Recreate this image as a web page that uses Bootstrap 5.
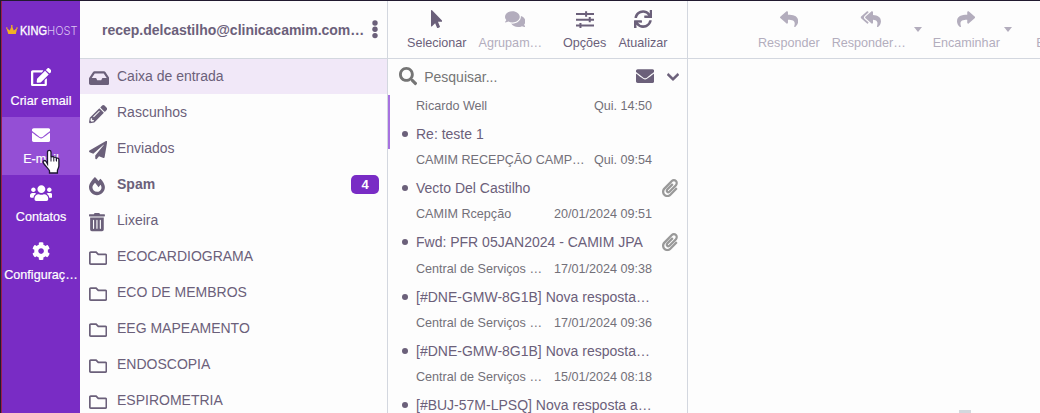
<!DOCTYPE html>
<html lang="pt-BR">
<head>
<meta charset="utf-8">
<title>Webmail</title>
<link href="https://cdn.jsdelivr.net/npm/bootstrap@5.3.0/dist/css/bootstrap.min.css" rel="stylesheet">
<style>
  :root { --ink:#6b607a; --line:#d3d7df; --brand:#792cc5; }
  body { font:14px/20px "Liberation Sans", Arial, sans-serif; color:var(--ink); background:#fdfdfd; height:413px; overflow:hidden; border-top:1px solid #211a30; }
  .fa { height:18.2px; width:auto; fill:currentColor; flex:none; display:block; }
  .frame { height:412px; border-left:1px solid #211a30; }
  .taskbar { width:79px; background:var(--brand); border-left:1px solid #97204d; color:#fff; }
  .brand { height:58px; padding:2px 0 0 4px; }
  .task { height:58px; color:#fff; font-size:12.6px; line-height:16px; padding-top:9px; text-decoration:none; white-space:nowrap; -webkit-text-stroke:.2px #fff; }
  .task .fa { margin-bottom:6.8px; }
  .task.on { background:#944fd5; }
  .folders { width:308px; border-right:1px solid var(--line); }
  .messages { width:300px; border-right:1px solid var(--line); }
  .top { height:58px; border-bottom:1px solid var(--line); flex:none; }
  .account { padding-left:22px; letter-spacing:-.01px; }
  .folder { height:36px; padding:0 8px 0 9px; }
  .folder > div { width:28px; padding-top:3px; flex:none; }
  .folder > span:nth-child(2) { padding-bottom:2px; }
  .folder.on { background:#f1e8f8; height:35px; margin-bottom:1px; }
  .folder.on > span:nth-child(2) { padding-bottom:1px; }
  .count { background:var(--brand); color:#fff; width:28px; height:19px; line-height:19px; border-radius:5px; font-size:13px; text-align:center; margin-bottom:1px; }
  .tool { padding:9px 6px 0; font-size:12.6px; line-height:16px; white-space:nowrap; }
  .tool .fa { margin:0 auto 7px; }
  .dim { color:#b3adbd; }
  .caret { width:0; border:4px solid transparent; border-top:5px solid #b3adbd; border-bottom:0; margin-top:26px; }
  .search { height:35px; padding:0 8px 0 11px; color:#757575; }
  .msgs { position:relative; margin-top:1px; }
  .focusbar { position:absolute; left:0; top:0; width:2px; height:54px; background:#a772e0; }
  .msg { height:54.2px; padding:0 9px 0 14px; white-space:nowrap; }
  .meta { height:23px; line-height:23px; font-size:12.6px; color:#737079; padding:0 26px 0 14px; }
  .subj { height:31.2px; padding-top:1px; }
  .dot { width:6px; height:6px; border-radius:50%; background:var(--ink); margin-right:8px; flex:none; }
  .clip { color:#999; margin-left:auto; }
  .pointer { position:absolute; left:42px; top:149px; }
  .tile { position:absolute; left:959px; top:410px; width:12px; height:3px; background:#d3d8de; }
</style>
<script src="https://cdn.jsdelivr.net/npm/bootstrap@5.3.0/dist/js/bootstrap.bundle.min.js"></script>
</head>
<body>
<svg width="0" height="0" class="position-absolute">
  <symbol id="edit" viewBox="0 0 576 512"><path d="M402.6 83.2l90.2 90.2c3.8 3.8 3.8 10 0 13.8L274.4 405.6l-92.8 10.3c-12.4 1.4-22.9-9.1-21.5-21.5l10.3-92.8L388.8 83.2c3.8-3.8 10-3.8 13.8 0zm162-22.9l-48.8-48.8c-15.2-15.2-39.9-15.2-55.2 0l-35.4 35.4c-3.8 3.8-3.8 10 0 13.8l90.2 90.2c3.8 3.8 10 3.8 13.8 0l35.4-35.4c15.2-15.3 15.2-40 0-55.2zM384 346.2V448H64V128h229.8c3.2 0 6.2-1.3 8.5-3.5l40-40c7.6-7.6 2.2-20.5-8.5-20.5H48C21.5 64 0 85.5 0 112v352c0 26.5 21.5 48 48 48h352c26.5 0 48-21.5 48-48V306.2c0-10.7-12.9-16-20.5-8.5l-40 40c-2.2 2.3-3.5 5.3-3.5 8.5z"/></symbol>
  <symbol id="envelope" viewBox="0 0 512 512"><path d="M502.3 190.8c3.9-3.1 9.7-.2 9.7 4.7V400c0 26.5-21.5 48-48 48H48c-26.5 0-48-21.5-48-48V195.6c0-5 5.7-7.8 9.7-4.7 22.4 17.4 52.1 39.5 154.1 113.6 21.1 15.4 56.7 47.8 92.2 47.6 35.7.3 72-32.8 92.3-47.6 102-74.1 131.6-96.3 154-113.7zM256 320c23.2.4 56.6-29.2 73.4-41.4 132.7-96.3 142.8-104.7 173.4-128.7 5.8-4.5 9.2-11.5 9.2-18.9v-19c0-26.5-21.5-48-48-48H48c-26.5 0-48 21.5-48 48v19c0 7.4 3.4 14.3 9.2 18.9 30.6 23.9 40.7 32.4 173.4 128.7 16.8 12.2 50.2 41.8 73.4 41.4z"/></symbol>
  <symbol id="users" viewBox="0 0 640 512"><path d="M96 224c35.3 0 64-28.7 64-64s-28.7-64-64-64-64 28.7-64 64 28.7 64 64 64zm448 0c35.3 0 64-28.7 64-64s-28.7-64-64-64-64 28.7-64 64 28.7 64 64 64zm32 32h-64c-17.6 0-33.5 7.1-45.1 18.6 40.3 22.1 68.9 62 75.1 109.4h66c17.7 0 32-14.3 32-32v-32c0-35.3-28.7-64-64-64zm-256 0c61.9 0 112-50.1 112-112S381.9 32 320 32 208 82.1 208 144s50.1 112 112 112zm76.8 32h-8.3c-20.8 10-43.9 16-68.5 16s-47.6-6-68.5-16h-8.3C179.6 288 128 339.6 128 403.2V432c0 26.5 21.5 48 48 48h288c26.5 0 48-21.5 48-48v-28.8c0-63.6-51.6-115.2-115.2-115.2zm-223.7-13.4C161.5 263.1 145.6 256 128 256H64c-35.3 0-64 28.7-64 64v32c0 17.7 14.3 32 32 32h65.9c6.3-47.4 34.9-87.3 75.2-109.4z"/></symbol>
  <symbol id="cog" viewBox="0 0 512 512"><path d="M487.4 315.7l-42.6-24.6c4.3-23.2 4.3-47 0-70.2l42.6-24.6c4.9-2.8 7.1-8.6 5.5-14-11.1-35.6-30-67.8-54.7-94.6-3.8-4.1-10-5.1-14.8-2.3L380.8 110c-17.9-15.4-38.5-27.3-60.8-35.1V25.8c0-5.6-3.9-10.5-9.4-11.7-36.7-8.2-74.3-7.8-109.2 0-5.5 1.2-9.4 6.1-9.4 11.7V75c-22.2 7.9-42.8 19.8-60.8 35.1L88.7 85.5c-4.9-2.8-11-1.9-14.8 2.3-24.7 26.7-43.6 58.9-54.7 94.6-1.7 5.4.6 11.2 5.5 14L67.3 221c-4.3 23.2-4.3 47 0 70.2l-42.6 24.6c-4.9 2.8-7.1 8.6-5.5 14 11.1 35.6 30 67.8 54.7 94.6 3.8 4.1 10 5.1 14.8 2.3l42.6-24.6c17.9 15.4 38.5 27.3 60.8 35.1v49.2c0 5.6 3.9 10.5 9.4 11.7 36.7 8.2 74.3 7.8 109.2 0 5.5-1.2 9.4-6.1 9.4-11.7v-49.2c22.2-7.9 42.8-19.8 60.8-35.1l42.6 24.6c4.9 2.8 11 1.9 14.8-2.3 24.7-26.7 43.6-58.9 54.7-94.6 1.5-5.5-.7-11.3-5.6-14.1zM256 336c-44.1 0-80-35.9-80-80s35.9-80 80-80 80 35.9 80 80-35.9 80-80 80z"/></symbol>
  <symbol id="paperclip" viewBox="0 0 448 512"><path d="M43.246 466.142c-58.43-60.289-57.341-157.511 1.386-217.581L254.392 34c44.316-45.332 116.351-45.336 160.671 0 43.89 44.894 43.943 117.329 0 162.276L232.214 383.128c-29.855 30.537-78.633 30.111-107.982-.998-28.275-29.97-27.368-77.473 1.452-106.953l143.743-146.835c6.182-6.314 16.312-6.422 22.626-.241l22.861 22.379c6.315 6.182 6.422 16.312.241 22.626L171.427 319.927c-4.932 5.045-5.236 13.428-.648 18.292 4.372 4.634 11.245 4.711 15.688.165l182.849-186.851c19.613-20.062 19.613-52.725-.011-72.798-19.189-19.627-49.957-19.637-69.154 0L90.39 293.295c-34.763 35.56-35.299 93.12-1.191 128.313 34.01 35.093 88.985 35.137 123.058.286l172.06-175.999c6.177-6.319 16.307-6.433 22.626-.256l22.877 22.364c6.319 6.177 6.434 16.307.256 22.626l-172.06 175.998c-59.576 60.938-155.943 60.216-214.77-.485z"/></symbol>
  <symbol id="folder" viewBox="0 0 512 512"><path d="M464 128H272l-54.63-54.63c-6-6-14.14-9.37-22.63-9.37H48C21.49 64 0 85.49 0 112v288c0 26.51 21.49 48 48 48h416c26.51 0 48-21.49 48-48V176c0-26.51-21.49-48-48-48zm0 272H48V112h140.12l54.63 54.63c6 6 14.14 9.37 22.63 9.37H464v224z"/></symbol>
  <symbol id="reply" viewBox="0 0 512 512"><path d="M8.309 189.836L184.313 37.851C199.719 24.546 224 35.347 224 56.015v80.053c160.629 1.839 288 34.032 288 186.258 0 61.441-39.581 122.309-83.333 154.132-13.653 9.931-33.111-2.533-28.077-18.631 45.344-145.012-21.507-183.51-176.59-185.742V360c0 20.7-24.3 31.453-39.687 18.164l-176.004-152c-11.071-9.562-11.086-26.753 0-36.328z"/></symbol>
</svg>

<div class="frame d-flex">
  <nav class="taskbar d-flex flex-column flex-shrink-0">
    <div class="brand d-flex align-items-center">
      <svg width="74" height="20" viewBox="0 0 74 20">
        <path d="M2 14L0 8l3.5 2.500L5.500 5.500l2 5L11 8 9.500 14z" transform="translate(.3 -1)" fill="#f0b024"/>
        <g fill="#f0b024"><circle cx=".8" cy="7" r=".8"/><circle cx="5.800" cy="4.800" r=".9"/><circle cx="11" cy="7" r=".8"/></g>
        <text x="14" y="14" font-family="Liberation Sans, sans-serif" font-size="12.500" fill="#fff" stroke="#fff" stroke-width=".35" textLength="27" lengthAdjust="spacingAndGlyphs">KING</text>
        <text x="41" y="14" font-family="Inter, sans-serif" font-weight="300" font-size="12.300" fill="#dcc4f2" textLength="30.500" lengthAdjust="spacingAndGlyphs">HOST</text>
      </svg>
    </div>
    <a class="task d-flex flex-column align-items-center"><svg class="fa" viewBox="0 0 576 512"><use href="#edit"/></svg>Criar email</a>
    <a class="task on d-flex flex-column align-items-center"><svg class="fa" viewBox="0 0 512 512"><use href="#envelope"/></svg>E-mail</a>
    <a class="task d-flex flex-column align-items-center"><svg class="fa" viewBox="0 0 640 512"><use href="#users"/></svg>Contatos</a>
    <a class="task d-flex flex-column align-items-center"><svg class="fa" viewBox="0 0 512 512"><use href="#cog"/></svg>Configuraç…</a>
  </nav>

  <aside class="folders flex-shrink-0">
    <div class="top account d-flex align-items-center fw-bold">
      <span class="flex-grow-1 text-nowrap">recep.delcastilho@clinicacamim.com…</span>
      <svg class="me-2" width="8" height="19" viewBox="0 0 8 19" fill="currentColor"><circle cx="4" cy="3" r="2.7"/><circle cx="4" cy="9.300" r="2.7"/><circle cx="4" cy="15.600" r="2.7"/></svg>
    </div>
    <div class="folder on d-flex align-items-center"><div><svg class="fa" viewBox="0 0 576 512"><path d="M567.938 243.908L462.25 85.374A48.003 48.003 0 0 0 422.311 64H153.689a48 48 0 0 0-39.938 21.374L8.062 243.908A47.994 47.994 0 0 0 0 270.533V400c0 26.51 21.49 48 48 48h480c26.51 0 48-21.49 48-48V270.533a47.994 47.994 0 0 0-8.062-26.625zM162.252 128h251.497l85.333 128H376l-32 64H232l-32-64H76.918l85.334-128z"/></svg></div><span>Caixa de entrada</span></div>
    <div class="folder d-flex align-items-center"><div><svg class="fa" viewBox="0 0 512 512"><path d="M497.9 142.1l-46.1 46.1c-4.7 4.7-12.3 4.7-17 0l-111-111c-4.7-4.7-4.7-12.3 0-17l46.1-46.1c18.7-18.7 49.1-18.7 67.9 0l60.1 60.1c18.8 18.7 18.8 49.1 0 67.9zM284.2 99.8L21.6 362.4.4 483.9c-2.9 16.4 11.4 30.6 27.8 27.8l121.5-21.3 262.6-262.6c4.7-4.7 4.7-12.3 0-17l-111-111c-4.8-4.7-12.4-4.7-17.1 0zM124.1 339.9c-5.5-5.5-5.5-14.3 0-19.8l154-154c5.5-5.5 14.3-5.5 19.8 0s5.5 14.3 0 19.8l-154 154c-5.5 5.5-14.3 5.5-19.8 0zM88 424h48v36.3l-64.5 11.3-31.1-31.1L51.7 376H88v48z"/></svg></div><span>Rascunhos</span></div>
    <div class="folder d-flex align-items-center"><div><svg class="fa" viewBox="0 0 512 512"><path d="M476 3.2L12.5 270.6c-18.1 10.4-15.8 35.6 2.2 43.2L121 358.4l287.3-253.2c5.5-4.9 13.3 2.6 8.6 8.3L176 407v80.5c0 23.6 28.5 32.9 42.5 15.8L282 426l124.6 52.2c14.2 6 30.4-2.9 33-18.2l72-432C515 7.8 493.3-6.8 476 3.2z"/></svg></div><span>Enviados</span></div>
    <div class="folder d-flex align-items-center fw-bold"><div><svg class="fa" viewBox="0 0 448 512"><path d="M323.56 51.2c-20.8 19.3-39.58 39.59-56.22 59.97C240.08 73.62 206.28 35.53 168 0 69.74 91.17 0 209.96 0 281.6 0 408.85 100.29 512 224 512s224-103.15 224-230.4c0-53.27-51.98-163.14-124.44-230.4zm-19.47 340.65C282.43 407.01 255.72 416 226.86 416 154.71 416 96 368.26 96 290.75c0-38.61 24.31-72.63 72.79-130.75 6.93 7.98 98.83 125.34 98.83 125.34l58.63-66.88c4.14 6.85 7.91 13.55 11.27 19.97 27.35 52.19 15.81 118.97-33.43 153.42z"/></svg></div><span class="flex-grow-1">Spam</span><span class="count">4</span></div>
    <div class="folder d-flex align-items-center"><div><svg class="fa" viewBox="0 0 448 512"><path d="M32 464a48 48 0 0 0 48 48h288a48 48 0 0 0 48-48V128H32zm272-256a16 16 0 0 1 32 0v224a16 16 0 0 1-32 0zm-96 0a16 16 0 0 1 32 0v224a16 16 0 0 1-32 0zm-96 0a16 16 0 0 1 32 0v224a16 16 0 0 1-32 0zM432 32H312l-9.4-18.7A24 24 0 0 0 281.1 0H166.8a23.72 23.72 0 0 0-21.4 13.3L136 32H16A16 16 0 0 0 0 48v32a16 16 0 0 0 16 16h416a16 16 0 0 0 16-16V48a16 16 0 0 0-16-16z"/></svg></div><span>Lixeira</span></div>
    <div class="folder d-flex align-items-center"><div><svg class="fa" viewBox="0 0 512 512"><use href="#folder"/></svg></div><span>ECOCARDIOGRAMA</span></div>
    <div class="folder d-flex align-items-center"><div><svg class="fa" viewBox="0 0 512 512"><use href="#folder"/></svg></div><span>ECO DE MEMBROS</span></div>
    <div class="folder d-flex align-items-center"><div><svg class="fa" viewBox="0 0 512 512"><use href="#folder"/></svg></div><span>EEG MAPEAMENTO</span></div>
    <div class="folder d-flex align-items-center"><div><svg class="fa" viewBox="0 0 512 512"><use href="#folder"/></svg></div><span>ENDOSCOPIA</span></div>
    <div class="folder d-flex align-items-center"><div><svg class="fa" viewBox="0 0 512 512"><use href="#folder"/></svg></div><span>ESPIROMETRIA</span></div>
  </aside>

  <section class="messages flex-shrink-0">
    <div class="top d-flex" style="padding-left:13px">
      <div class="tool"><svg class="fa" viewBox="0 0 320 512"><path d="M302.189 329.126H196.105l55.831 135.993c3.889 9.428-.555 19.999-9.444 23.999l-49.165 21.427c-9.165 4-19.443-.571-23.332-9.714l-53.053-129.136-86.664 89.138C18.729 472.71 0 463.554 0 447.977V18.299C0 1.899 19.921-6.096 30.277 5.443l284.412 292.542c11.472 11.179 3.007 31.141-12.5 31.141z"/></svg>Selecionar</div>
      <div class="tool dim" style="width:84.5px"><svg class="fa" viewBox="0 0 576 512"><path d="M416 192c0-88.4-93.1-160-208-160S0 103.6 0 192c0 34.3 14.1 65.9 38 92-13.4 30.2-35.5 54.2-35.8 54.5-2.2 2.3-2.8 5.7-1.5 8.7S4.8 352 8 352c36.6 0 66.9-12.3 88.7-25 32.2 15.7 70.3 25 111.3 25 114.9 0 208-71.6 208-160zm122 220c23.9-26 38-57.7 38-92 0-66.9-53.5-124.2-129.3-148.1.9 6.6 1.3 13.3 1.3 20.1 0 105.9-107.7 192-240 192-10.8 0-21.3-.8-31.7-1.9C207.8 439.6 281.8 480 368 480c41 0 79.1-9.2 111.3-25 21.8 12.7 52.1 25 88.7 25 3.2 0 6.1-1.9 7.3-4.8 1.3-2.9.7-6.3-1.5-8.7-.3-.3-22.4-24.2-35.8-54.5z"/></svg>Agrupam…</div>
      <div class="tool"><svg class="fa" viewBox="0 0 18 18"><path d="M0 3h18v2H0zM0 8.600h18v2H0zM0 14.400h18v2H0zM9 1.200h2v5.400H9zM12.600 7h2v5.200h-2zM3.400 12.800h2V18h-2z"/></svg>Opções</div>
      <div class="tool"><svg class="fa" viewBox="0 0 512 512"><path d="M440.65 12.57l4 82.77A247.16 247.16 0 0 0 255.83 8C134.73 8 33.91 94.92 12.29 209.82A12 12 0 0 0 24.09 224h49.05a12 12 0 0 0 11.67-9.26 175.91 175.91 0 0 1 317-56.94l-101.46-4.86a12 12 0 0 0-12.57 12v47.41a12 12 0 0 0 12 12H500a12 12 0 0 0 12-12V12a12 12 0 0 0-12-12h-47.37a12 12 0 0 0-11.98 12.57zM255.83 432a175.61 175.61 0 0 1-146-77.8l101.8 4.87a12 12 0 0 0 12.57-12v-47.4a12 12 0 0 0-12-12H12a12 12 0 0 0-12 12V500a12 12 0 0 0 12 12h47.35a12 12 0 0 0 12-12.6l-4.15-82.57A247.17 247.17 0 0 0 255.83 504c121.11 0 221.93-86.92 243.55-201.82a12 12 0 0 0-11.8-14.18h-49.05a12 12 0 0 0-11.67 9.26A175.86 175.86 0 0 1 255.83 432z"/></svg>Atualizar</div>
    </div>
    <div class="search d-flex align-items-center">
      <svg class="fa" viewBox="0 0 512 512"><path d="M505 442.7L405.3 343c-4.5-4.5-10.6-7-17-7H372c27.6-35.3 44-79.7 44-128C416 93.1 322.9 0 208 0S0 93.1 0 208s93.1 208 208 208c48.3 0 92.7-16.4 128-44v16.3c0 6.4 2.5 12.5 7 17l99.7 99.7c9.4 9.4 24.6 9.4 33.9 0l28.3-28.3c9.4-9.4 9.4-24.6.1-34zM208 336c-70.7 0-128-57.2-128-128 0-70.7 57.2-128 128-128 70.7 0 128 57.2 128 128 0 70.7-57.2 128-128 128z"/></svg>
      <span class="flex-grow-1" style="padding:1px 0 0 7px">Pesquisar...</span>
      <svg class="fa" style="color:var(--ink);margin-right:13px" viewBox="0 0 512 512"><use href="#envelope"/></svg>
      <svg style="fill:var(--ink);stroke:var(--ink);stroke-width:22" width="12" height="14" viewBox="0 0 448 512"><path d="M207.029 381.476L12.686 187.132c-9.373-9.373-9.373-24.569 0-33.941l22.667-22.667c9.357-9.357 24.522-9.375 33.901-.04L224 284.505l154.745-154.021c9.379-9.335 24.544-9.317 33.901.04l22.667 22.667c9.373 9.373 9.373 24.569 0 33.941L240.971 381.476c-9.373 9.372-24.569 9.372-33.942 0z"/></svg>
    </div>
    <div class="msgs">
      <div class="focusbar"></div>
      <div class="msg"><div class="meta d-flex justify-content-between"><span>Ricardo Well</span><span>Qui. 14:50</span></div><div class="subj d-flex align-items-center"><i class="dot"></i>Re: teste 1</div></div>
      <div class="msg"><div class="meta d-flex justify-content-between"><span>CAMIM RECEPÇÃO CAMP…</span><span>Qui. 09:54</span></div><div class="subj d-flex align-items-center"><i class="dot"></i>Vecto Del Castilho<svg class="fa clip" viewBox="0 0 448 512"><use href="#paperclip"/></svg></div></div>
      <div class="msg"><div class="meta d-flex justify-content-between"><span>CAMIM Rcepção</span><span>20/01/2024 09:51</span></div><div class="subj d-flex align-items-center"><i class="dot"></i>Fwd: PFR 05JAN2024 - CAMIM JPA<svg class="fa clip" viewBox="0 0 448 512"><use href="#paperclip"/></svg></div></div>
      <div class="msg"><div class="meta d-flex justify-content-between"><span>Central de Serviços …</span><span>17/01/2024 09:38</span></div><div class="subj d-flex align-items-center"><i class="dot"></i>[#DNE-GMW-8G1B] Nova resposta…</div></div>
      <div class="msg"><div class="meta d-flex justify-content-between"><span>Central de Serviços …</span><span>17/01/2024 09:36</span></div><div class="subj d-flex align-items-center"><i class="dot"></i>[#DNE-GMW-8G1B] Nova resposta…</div></div>
      <div class="msg"><div class="meta d-flex justify-content-between"><span>Central de Serviços …</span><span>15/01/2024 08:18</span></div><div class="subj d-flex align-items-center"><i class="dot"></i>[#BUJ-57M-LPSQ] Nova resposta a…</div></div>
    </div>
  </section>

  <main class="flex-grow-1 overflow-hidden">
    <div class="top d-flex dim" style="padding-left:64px">
      <div class="tool"><svg class="fa" viewBox="0 0 512 512"><use href="#reply"/></svg>Responder</div>
      <div class="tool flex-shrink-0" style="width:88px"><svg class="fa" style="transform:translateX(1.5px)" viewBox="0 0 576 512"><path d="M136.309 189.836L312.313 37.851C327.72 24.546 352 35.348 352 56.015v82.763c129.182 10.231 224 52.212 224 183.548 0 61.441-39.582 122.309-83.333 154.132-13.653 9.931-33.111-2.533-28.077-18.631 38.512-123.162-3.922-169.482-112.59-182.015v84.175c0 20.701-24.3 31.453-39.687 18.164L136.309 226.164c-11.071-9.561-11.086-26.753 0-36.328zm-128 36.328L184.313 378.15C199.7 391.439 224 380.687 224 359.986v-15.818l-108.606-93.785A55.96 55.96 0 0 1 96 207.998a55.953 55.953 0 0 1 19.393-42.38L224 71.832V56.015c0-20.667-24.28-31.469-39.687-18.164L8.309 189.836c-11.086 9.575-11.071 26.767 0 36.328z"/></svg>Responder…</div>
      <div class="caret flex-shrink-0"></div>
      <div class="tool flex-shrink-0" style="margin-left:5px"><svg class="fa" viewBox="0 0 512 512"><use href="#reply" transform="translate(512 0) scale(-1 1)"/></svg>Encaminhar</div>
      <div class="caret flex-shrink-0" style="margin-left:-2px"></div>
      <div class="tool flex-shrink-0" style="padding-left:24.5px;padding-top:34.2px">E</div>
    </div>
  </main>
</div>
<div class="tile"></div>
<svg class="pointer" width="19" height="27" viewBox="0 0 19 27"><path d="M5.500 15V3C5.500.8 9 .8 9 3V8.500c.3-1.500 2.800-1.300 2.800.3.5-1.100 2.600-.8 2.600.8.5-.9 2.500-.6 2.500 1.100v6c0 2.200-1.500 3.500-1.500 5V24H7.500v-2.200C6.500 20 4 17.500 1.700 14.500 0 12 2.700 10.700 4 12.300z" fill="#fff" stroke="#1d1730" stroke-width="1.300"/><path d="M9 8.500v4M11.800 9v3.500M14.500 10v2.500" stroke="#1d1730" stroke-width="1" fill="none"/></svg>
</body>
</html>
